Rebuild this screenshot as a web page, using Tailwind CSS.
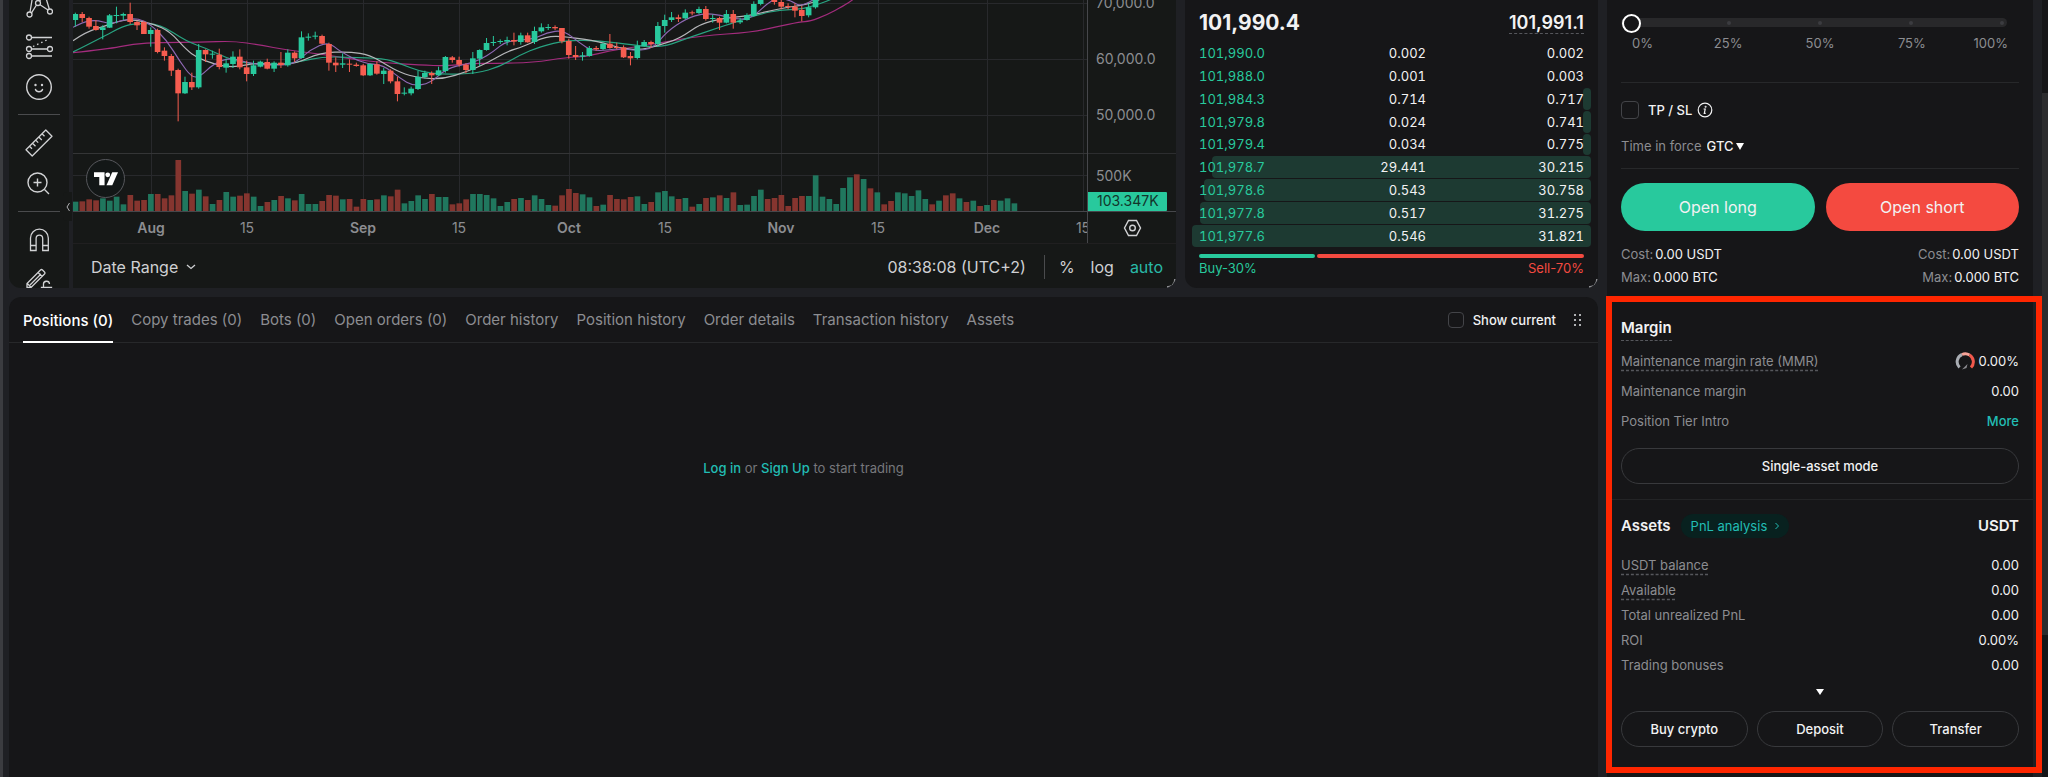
<!DOCTYPE html>
<html lang="en">
<head>
  <meta charset="UTF-8" />
  <meta name="viewport" content="width=device-width, initial-scale=1.0"/>
  <title>BTCUSDT Futures</title>
  <script src="https://cdn.jsdelivr.net/npm/@tailwindcss/browser@4"></script>
</head>
<body class="bg-[#1f2024] text-[#f2f2f3] font-['Inter',sans-serif] text-[13px] leading-5">

  <div class="flex h-screen min-h-[777px] overflow-hidden border-l-3 border-[#3b3c40] pl-1.5">

    <main class="flex min-w-0 flex-1 flex-col gap-[9px]">
      <div class="flex h-72 gap-[9px]">

        <!-- Chart -->
        <section class="relative flex min-w-0 flex-1 overflow-hidden rounded-b-xl bg-[#161817]">

          <!-- Drawing tools -->
          <div class="flex w-[60px] shrink-0 flex-col items-center overflow-hidden text-[#d2d3d5]">
            <button aria-label="Patterns" class="-mt-4 flex h-[41px] shrink-0 items-center justify-center">
              <svg class="size-7" viewBox="0 0 28 28" fill="none" stroke="currentColor" stroke-width="1.3"><circle cx="4.5" cy="23.5" r="2.5"/><circle cx="25" cy="20.5" r="2.5"/><circle cx="13" cy="12" r="2.5"/><circle cx="8" cy="3" r="2.5"/><circle cx="20" cy="3" r="2.5"/><path d="M5 21 7.6 5.5M6.5 21.8 11.5 14M15 13.7 23 19M20.5 5.5 24.3 18M18.5 5 14.5 10"/></svg>
            </button>
            <button aria-label="Fib retracement" class="flex h-[41px] shrink-0 items-center justify-center">
              <svg class="size-7" viewBox="0 0 28 28" fill="none" stroke="currentColor" stroke-width="1.3"><circle cx="4" cy="5.5" r="2.5"/><circle cx="4" cy="17" r="2.5"/><circle cx="25" cy="17" r="2.5"/><circle cx="4" cy="24" r="2.5"/><path d="M6.5 5.5H27M6.5 17H22.5M6.5 24H27"/><path d="M8 14.5 24 7" stroke-dasharray="1.5 3"/></svg>
            </button>
            <button aria-label="Emoji" class="flex h-[41px] shrink-0 items-center justify-center">
              <svg class="size-7" viewBox="0 0 28 28" fill="none" stroke="currentColor" stroke-width="1.4"><circle cx="14" cy="14" r="12.3"/><path d="M10.5 16.5c1 3 6 3 7 0" stroke-linecap="round"/><circle cx="10.5" cy="12" r="1.2" fill="currentColor" stroke="none"/><circle cx="17" cy="12" r="1.2" fill="currentColor" stroke="none"/></svg>
            </button>
            <div class="my-[7px] h-px w-[42px] shrink-0 bg-[#4a4b4d]"></div>
            <button aria-label="Measure" class="flex h-[41px] shrink-0 items-center justify-center">
              <svg class="size-7" viewBox="0 0 28 28" fill="none" stroke="currentColor" stroke-width="1.3" stroke-linejoin="round"><path d="M1 20.8 20.8 1 27 7.2 7.2 27ZM4.5 17.3l2.5 2.5M7.5 14.3l3 3M10.7 11.1l2.5 2.5M13.8 8l3 3M17 4.8l2.5 2.5"/></svg>
            </button>
            <button aria-label="Zoom in" class="flex h-[41px] shrink-0 items-center justify-center">
              <svg class="size-7" viewBox="0 0 28 28" fill="none" stroke="currentColor" stroke-width="1.4"><circle cx="12.5" cy="12.5" r="9.5"/><path d="M12.5 8.5v8M8.5 12.500h8M19.5 19.5 24 24"/></svg>
            </button>
            <div class="my-[7px] h-px w-[42px] shrink-0 bg-[#4a4b4d]"></div>
            <button aria-label="Magnet" class="flex h-[41px] shrink-0 items-center justify-center">
              <svg class="size-7" viewBox="0 0 28 28" fill="none" stroke="currentColor" stroke-width="1.3"><path d="M5.5 24.5V12a8.9 8.9 0 0 1 17.8 0v12.5h-5.6V12.5a3.3 3.3 0 0 0-6.6 0v12ZM5.5 19.5h5.6M17.7 19.5h5.6"/></svg>
            </button>
            <button aria-label="Lock drawings" class="flex h-[41px] shrink-0 items-center justify-center">
              <svg class="size-7" viewBox="0 0 28 28" fill="none" stroke="currentColor" stroke-width="1.3"><path d="M2 20.5v-4L15.5 3a1.5 1.5 0 0 1 2 0l2 2a1.5 1.5 0 0 1 0 2L6 20.5ZM13 5.5l4 4M2.3 16.5l3.9 3.9M5 18 16 7"/><path d="M16.5 20.5h10v8h-10ZM18.5 20.5v-3a3 3 0 0 1 6-.5"/></svg>
            </button>
          </div>

          <div class="w-1 shrink-0 bg-[#1f2024]"></div>

          <div class="flex min-w-0 flex-1 flex-col">
            <div class="flex h-[243px]">
              <svg id="plot" class="h-full min-w-0 flex-1" viewBox="0 0 1014 243" preserveAspectRatio="xMinYMin slice"></svg>
              <svg class="h-full w-[89px] shrink-0 border-l border-[#46474b] text-sm" viewBox="0 0 88 243" fill="#8c8d91">
                <path d="M0 153.5H88" stroke="#2c2d2f"/>
                <path d="M0 211.5H88" stroke="#46474b"/>
                <text x="8" y="8">70,000.0</text>
                <text x="8" y="64">60,000.0</text>
                <text x="8" y="120">50,000.0</text>
                <text x="8" y="181">500K</text>
                <rect x="-1" y="192" width="80" height="19" rx="1" fill="#28c99d"/>
                <text x="9" y="206" fill="#12352b">103.347K</text>
                <g fill="none" stroke="#d2d3d5" stroke-width="1.4"><path d="M40.500 220.500h8l4 7.500-4 7.500h-8l-4-7.500Z"/><circle cx="44.5" cy="228" r="2.8"/></g>
              </svg>
            </div>
            <div class="flex flex-1 items-center border-t border-[#201f20] pl-[18px] pr-[13px] pt-0.5 text-base text-[#cfd0d3]">
              <button class="flex items-center gap-2">Date Range
                <svg class="h-1.5 w-2.5" viewBox="0 0 10 6" fill="none" stroke="currentColor" stroke-width="1.3"><path d="m1 1 4 3.500L9 1"/></svg>
              </button>
              <span class="ml-auto">08:38:08 (UTC+2)</span>
              <span class="ml-[18px] mr-3.5 h-6 w-px bg-[#4a4b4d]"></span>
              <button>%</button>
              <button class="ml-4">log</button>
              <button class="ml-4 text-[#29b8a8]">auto</button>
            </div>
          </div>

          <button aria-label="Collapse tools" class="absolute left-[54px] top-48 flex h-[29px] w-[9px] items-center justify-center rounded-l bg-[#161817] text-[#b0b1b4]">
            <svg class="h-2.5 w-1" viewBox="0 0 4 10" fill="none" stroke="currentColor"><path d="M3.5 1 1 5l2.500 4"/></svg>
          </button>
          <a href="#" aria-label="TradingView" class="absolute left-[77px] top-[159px] flex size-[39px] items-center justify-center rounded-full border border-[#56575c] bg-[#131717]">
            <svg class="h-3.5 w-6" viewBox="0 0 25 14" fill="#fff"><path d="M0 0h11v13.500H5.500V5H0Z"/><circle cx="14.3" cy="2.7" r="2.5"/><path d="M19 0h6l-6 13.500h-6Z"/></svg>
          </a>
          <div class="absolute bottom-0 right-0 size-[9px] rounded-br-lg border-b-2 border-r-2 border-[#8c8d91]"></div>
        </section>

        <!-- Order book -->
        <section class="relative w-[413px] shrink-0 overflow-hidden rounded-b-xl bg-[#161618] px-[7px]">
          <div class="flex h-[42px] items-center justify-between px-[7px] pt-1">
            <span class="text-[21px] font-bold">101,990.4</span>
            <span class="border-b border-dashed border-[#56575c] text-lg leading-5 font-semibold">101,991.1</span>
          </div>
          <div id="book" class="grid h-[205px] auto-rows-fr gap-px tabular-nums"></div>
          <div class="mt-[7px] flex gap-0.5 px-[7px]">
            <div class="h-1 w-[30%] rounded-full bg-[#28c99d]"></div>
            <div class="h-1 flex-1 rounded-full bg-[#f44a40]"></div>
          </div>
          <div class="flex justify-between px-[7px]">
            <span class="text-[#28c99d]">Buy-30%</span>
            <span class="text-[#f44a40]">Sell-70%</span>
          </div>
          <div class="absolute bottom-0 right-0 size-[9px] rounded-br-lg border-b-2 border-r-2 border-[#8c8d91]"></div>
        </section>
      </div>

      <!-- Positions -->
      <section class="flex flex-1 flex-col rounded-t-xl bg-[#161618]">
        <nav class="flex h-[46px] items-stretch gap-[18px] whitespace-nowrap border-b border-[#27282a] pl-3.5 pr-4 pt-px text-[15px] text-[#8c8d91]">
          <button class="-mb-px border-b-2 border-white pt-0.5 font-medium text-white">Positions (0)</button>
          <button>Copy trades (0)</button>
          <button>Bots (0)</button>
          <button>Open orders (0)</button>
          <button>Order history</button>
          <button>Position history</button>
          <button>Order details</button>
          <button>Transaction history</button>
          <button>Assets</button>
          <label class="ml-auto flex items-center gap-[9px] text-[13px] font-medium text-[#f2f2f3]">
            <input type="checkbox" class="size-4 appearance-none rounded border border-[#434448]" />
            Show current
          </label>
          <button aria-label="Drag panel">
            <svg class="h-3 w-2" viewBox="0 0 8 12" fill="#b0b1b4"><path d="M0 0h2v2H0zM5 0h2v2H5zM0 5h2v2H0zM5 5h2v2H5zM0 10h2v2H0zM5 10h2v2H5z"/></svg>
          </button>
        </nav>
        <p class="mt-[115px] text-center text-[#77787c]">
          <a href="#" class="font-medium text-[#22bdb4]">Log in</a>
          or <a href="#" class="font-medium text-[#22bdb4]">Sign Up</a>
          to start trading
        </p>
      </section>
    </main>

    <!-- Trade panel -->
    <aside class="relative mx-[9px] flex w-[426px] shrink-0 flex-col bg-[#161618]">
      <form class="h-[296px] px-3.5 pt-3">
        <div class="relative h-[21px]">
          <div class="absolute inset-x-0 top-1.5 mr-3 flex h-[9px] items-center justify-between rounded-full bg-[#28282a] pl-[15px] pr-[3px]">
            <span class="size-1"></span>
            <span class="size-1 rounded-full bg-[#3b3c40]"></span>
            <span class="size-1 rounded-full bg-[#3b3c40]"></span>
            <span class="size-1 rounded-full bg-[#3b3c40]"></span>
            <span class="size-1 rounded-full bg-[#3b3c40]"></span>
          </div>
          <input type="range" aria-label="Order size" min="0" max="100" value="0" class="absolute inset-x-px top-0 h-[22px] appearance-none bg-transparent [&::-webkit-slider-thumb]:size-[19px] [&::-webkit-slider-thumb]:appearance-none [&::-webkit-slider-thumb]:rounded-full [&::-webkit-slider-thumb]:border-2 [&::-webkit-slider-thumb]:border-white [&::-webkit-slider-thumb]:bg-[#161618]" />
        </div>
        <div class="grid grid-cols-[2fr_3fr_3fr_3fr_2fr] text-center text-[#8c8d91]">
          <span class="pl-[11px] text-left">0%</span><span>25%</span><span>50%</span><span>75%</span><span class="pr-[11px] text-right">100%</span>
        </div>
        <div class="mt-[29px] border-t border-[#27282a] pt-[17px]">
          <label class="flex items-center gap-[9px] font-medium">
            <input type="checkbox" class="size-[18px] appearance-none rounded border border-[#434448]" />
            <span class="flex items-center gap-[5px]">TP / SL
              <svg class="size-4" viewBox="0 0 16 16" fill="none" stroke="currentColor" stroke-width="1.2"><circle cx="8" cy="8" r="6.8"/><path d="M6.6 7h1.6l-.9 4.300h1.400"/><circle cx="8.6" cy="4.7" r=".4"/></svg>
            </span>
          </label>
        </div>
        <div class="mt-4 flex items-center gap-[5px] border-b border-[#27282a] pb-3">
          <label for="tif" class="text-[#8c8d91]">Time in force</label>
          <div class="relative flex items-center">
            <select id="tif" class="appearance-none pr-2.5 font-medium">
              <option>GTC</option>
              <option>IOC</option>
              <option>FOK</option>
            </select>
            <svg class="pointer-events-none absolute right-0 size-2" viewBox="0 0 8 8" fill="#fff"><path d="M0 1h8L4 8Z"/></svg>
          </div>
        </div>
        <div class="mt-3.5 grid grid-cols-2 gap-[11px] text-base">
          <button type="button" class="h-12 rounded-full bg-[#28c99d]">Open long</button>
          <button type="button" class="h-12 rounded-full bg-[#f44a40]">Open short</button>
        </div>
        <div class="mt-3 flex justify-between leading-[23px]">
          <div>
            <p class="flex gap-0.5"><span class="text-[#8c8d91]">Cost:</span><span>0.00 USDT</span></p>
            <p class="flex gap-0.5"><span class="text-[#8c8d91]">Max:</span><span>0.000 BTC</span></p>
          </div>
          <div>
            <p class="flex justify-end gap-0.5"><span class="text-[#8c8d91]">Cost:</span><span>0.00 USDT</span></p>
            <p class="flex justify-end gap-0.5"><span class="text-[#8c8d91]">Max:</span><span>0.000 BTC</span></p>
          </div>
        </div>
      </form>

      <!-- Margin -->
      <section class="px-3.5 pb-[15px] pt-5">
        <h2 class="mb-2.5 w-fit border-b border-dashed border-[#56575c] text-[15px] font-semibold leading-6">Margin</h2>
        <dl class="flex flex-col gap-2.5 text-[#8c8d91]">
          <div class="flex justify-between">
            <dt class="underline decoration-[#56575c] decoration-dashed underline-offset-4">Maintenance margin rate (MMR)</dt>
            <dd class="flex items-center gap-1 text-[#f2f2f3]">
              <svg class="size-5" viewBox="0 0 20 20" fill="none" stroke-width="3"><path d="M4.5 16.5A8 8 0 0 1 7 3.500" stroke="#a9adb3"/><path d="M7 3.500a8 8 0 0 1 7.500.5" stroke="#f7a398"/><path d="M14.5 4a8 8 0 0 1 1.500 12.500" stroke="#f0584c"/><path d="M7 18.500 12.500 13l-1 4Z" fill="#8c8d91"/></svg>
              0.00%
            </dd>
          </div>
          <div class="flex justify-between">
            <dt>Maintenance margin</dt>
            <dd class="text-[#f2f2f3]">0.00</dd>
          </div>
          <div class="flex justify-between">
            <dt>Position Tier Intro</dt>
            <dd><a href="#" class="font-medium text-[#22bdb4]">More</a></dd>
          </div>
        </dl>
        <button class="mt-[17px] h-9 w-full rounded-full border border-[#38393c] font-medium">Single-asset mode</button>
      </section>

      <!-- Assets -->
      <section class="border-t border-[#232426] px-3.5 pt-3.5">
        <div class="mb-[17px] flex items-center">
          <h2 class="text-[15px] font-semibold">Assets</h2>
          <a href="#" class="ml-2.5 flex h-6 items-center gap-2 rounded-full bg-[#08211f] px-2.5 text-[#22bdb4]">PnL analysis
            <svg class="h-2 w-1" viewBox="0 0 4 8" fill="none" stroke="currentColor"><path d="m.5 1 3 3-3 3"/></svg>
          </a>
          <span class="ml-auto text-[15px] font-semibold">USDT</span>
        </div>
        <dl class="flex flex-col gap-[5px] text-[#8c8d91]">
          <div class="flex justify-between">
            <dt class="underline decoration-[#56575c] decoration-dashed underline-offset-4">USDT balance</dt>
            <dd class="text-[#f2f2f3]">0.00</dd>
          </div>
          <div class="flex justify-between">
            <dt class="underline decoration-[#56575c] decoration-dashed underline-offset-4">Available</dt>
            <dd class="text-[#f2f2f3]">0.00</dd>
          </div>
          <div class="flex justify-between">
            <dt>Total unrealized PnL</dt>
            <dd class="text-[#f2f2f3]">0.00</dd>
          </div>
          <div class="flex justify-between">
            <dt>ROI</dt>
            <dd class="text-[#f2f2f3]">0.00%</dd>
          </div>
          <div class="flex justify-between">
            <dt>Trading bonuses</dt>
            <dd class="text-[#f2f2f3]">0.00</dd>
          </div>
        </dl>
        <button aria-label="Show more" class="mx-auto mt-3.5 block">
          <svg class="h-1.5 w-2" viewBox="0 0 8 6" fill="#fff"><path d="M0 0h8L4 6Z"/></svg>
        </button>
        <div class="mt-4 grid grid-cols-3 gap-[9px] font-medium">
          <button class="h-9 rounded-full border border-[#38393c]">Buy crypto</button>
          <button class="h-9 rounded-full border border-[#38393c]">Deposit</button>
          <button class="h-9 rounded-full border border-[#38393c]">Transfer</button>
        </div>
      </section>

      <!-- Highlight frame -->
      <div class="pointer-events-none absolute -left-px -right-[9px] bottom-1 top-[296px] border-6 border-[#ff2600]"></div>
    </aside>

    <div class="w-1.5 shrink-0 bg-[#161618] pt-[93px]">
      <div class="h-[542px] bg-[#2c2c2e]"></div>
    </div>
  </div>

  <script>
    // one entry per day: direction, high, open/close top, open/close bottom, low
    const candles = `g38,42,60,80 r36,42,54,66 r50,54,80,86 r60,78,90,92 g76,82,90,118 g42,46,83,84 g20,45,48,70 g38,42,47,60
      r8,42,66,72 r62,66,76,90 r62,66,102,102 g82,90,102,140 r86,90,156,160 r142,152,168,182 r162,168,212,228 r206,210,280,364
      g230,246,280,282 r218,246,262,270 g132,150,262,266 r148,150,163,186 g152,161,164,176 r146,164,201,208 g176,190,203,218 g154,170,192,204
      r148,170,202,208 r182,202,222,244 g182,196,222,228 g182,185,200,202 r176,186,206,208 g184,188,206,216 r156,188,195,204 g148,158,196,200
      r154,158,175,186 g94,112,174,176 g100,110,113,122 g95,107,110,118 r104,108,131,132 r128,132,188,212 r172,188,196,216 g160,190,194,204
      r178,191,194,216 r188,194,198,200 r192,196,226,228 g190,192,226,228 r184,193,221,224 g204,212,222,252 r208,212,244,250 r230,244,282,304
      g262,278,281,286 g260,266,280,286 g212,230,267,270 g212,219,231,236 r214,219,226,252 g200,211,226,228 g168,171,213,218 r168,172,180,188
      r170,180,194,200 r190,194,210,220 g156,175,210,222 g148,150,176,198 g114,129,150,152 g108,126,129,138 g118,123,126,132 g110,120,125,136
      r98,120,125,136 g98,106,126,134 r98,106,127,128 g80,93,126,132 g70,82,94,98 g72,81,84,90 r76,81,85,90 r84,84,124,130
      r116,123,165,176 r138,165,171,180 g156,166,170,182 g138,144,168,170 r138,144,148,152 g128,131,147,150 r102,131,144,146 r128,141,144,148
      r136,142,172,174 r156,168,175,196 g122,137,174,178 g120,126,139,140 r122,126,132,144 g66,78,132,138 g44,60,78,98 g36,52,60,66
      r44,52,57,66 g28,38,55,58 r32,37,40,46 g20,27,39,42 r18,27,57,62 g44,54,57,68 r50,54,68,90 g30,42,68,70
      r30,42,68,86 g54,62,67,72 g40,45,60,62 g4,12,48,50 g-10,-4,12,16 r-20,-16,-8,-4 r-10,0,6,14 r0,6,20,28
      r10,18,21,28 r10,20,32,52 r18,30,48,64 g10,22,46,52 g-10,-4,22,26`.split(/\s+/);

    const volumes = `g28 r29 r35 r32 g38 g31 g43 g20 r48 r31 r33 g51 r51 r38 r47 r153 g60 r52 g64 r44 g21 r33 g57 g43
      r46 r53 g43 g15 r27 g33 r45 g38 r32 g51 g21 g21 r30 r48 r46 g35 r36 r13 r36 g33 r35 g47 r44 r64
      g23 g30 g47 g36 r51 g42 g42 r20 r23 r35 g51 g51 g48 g38 g15 g27 r36 g39 r33 g47 g36 g18 r16 r47
      r66 r54 g50 g41 r15 g19 r48 r36 r35 r42 g44 g21 r27 g56 g60 g44 r36 g39 r13 g21 r39 g41 r47 g39
      r56 g18 g19 g45 g64 r36 r39 r48 r15 r39 r45 g45 g107 g43 g36 g21 g69 g101 r110 g96 r68 g56 r20 r30
      g56 g53 g45 g62 g36 r20 g31 r47 r53 g38 r27 g31 r15 g18 r33 g31 g38 g23`.split(/\s+/);

    const averages = [
      ["#a32c7d", "219,158 320,148 400,132 480,127 600,127 700,123 780,135 860,150 960,162 1060,178 1150,188 1260,195 1340,198 1420,190 1480,190 1600,188 1700,172 1760,170 1830,152 1900,142 2000,125 2100,108 2260,96 2330,80 2400,66 2430,64 2480,45 2530,18 2558,0 2580,-20"],
      ["#28a381", "219,156 300,115 370,78 410,70 480,72 560,125 620,145 680,175 740,190 830,195 900,185 970,170 1050,172 1150,175 1200,190 1260,215 1330,224 1430,220 1500,200 1560,165 1620,140 1700,120 1800,122 1900,135 1950,140 2000,138 2060,115 2150,85 2200,68 2280,42 2340,30 2400,28 2440,18 2490,0 2520,-15"],
      ["#b5b6b9", "219,122 260,95 310,80 360,62 400,58 460,72 510,95 560,150 590,172 640,192 700,203 770,188 830,195 890,190 960,158 1050,155 1110,165 1160,195 1200,218 1260,235 1330,237 1400,215 1460,190 1520,155 1570,140 1640,108 1700,110 1800,125 1860,145 1920,150 1970,138 2040,115 2100,72 2170,55 2240,48 2300,35 2360,22 2400,17 2450,5 2480,-15"],
      ["#8e68b3", "219,82 250,65 290,60 330,72 370,60 410,54 450,72 500,120 540,185 575,232 600,230 640,192 690,172 740,188 800,195 860,195 890,185 930,150 985,125 1020,155 1090,190 1150,195 1200,235 1240,258 1290,250 1340,205 1400,192 1440,180 1480,155 1520,122 1600,118 1640,98 1690,90 1740,130 1780,155 1860,145 1910,152 1960,145 2000,95 2060,55 2110,40 2160,45 2220,60 2260,50 2300,12 2330,-6 2370,0 2400,20 2440,0 2470,-20"]
    ];

    const months = [[151, "Aug"], [247, "15"], [363, "Sep"], [459, "15"], [569, "Oct"], [665, "15"], [781, "Nov"], [878, "15"], [987, "Dec"], [1083, "15"]];

    // rounds the corners of a list of points
    function smooth(list) {
      const p = list.split(" ").map(s => s.split(",").map(Number));
      let d = `M${p[0]}`;
      for (let i = 1; i < p.length - 1; i++) {
        d += `Q${p[i]} ${(p[i][0] + p[i + 1][0]) / 2},${(p[i][1] + p[i + 1][1]) / 2}`;
      }
      return d;
    }

    let out = "";
    months.forEach(([x]) => out += `<path d="M${x - 73}.5 0V211" stroke="#28292c"/>`);
    [3, 59, 115, 175].forEach(y => out += `<path d="M0 ${y}.5H1014" stroke="#28292c"/>`);
    out += `<path d="M0 153.5H1014" stroke="#343536"/>`;

    out += `<g transform="scale(0.33333) translate(-219 0)">`;
    volumes.forEach((v, i) => {
      const h = Number(v.slice(1));
      out += `<rect x="${218 + i * 20.56}" y="${633 - h}" width="17" height="${h}" fill="${v[0] === "g" ? "#20775e" : "#85352f"}"/>`;
    });
    averages.forEach(([color, list]) => out += `<path d="${smooth(list)}" fill="none" stroke="${color}" stroke-width="3.5"/>`);
    candles.forEach((c, i) => {
      const [hi, top, bottom, lo] = c.slice(1).split(",").map(Number);
      const x = 226 + i * 20.56;
      const fill = c[0] === "g" ? "#28c99d" : "#f65d50";
      out += `<rect x="${x - 1.5}" y="${hi}" width="3" height="${lo - hi}" fill="${fill}"/>`;
      out += `<rect x="${x - 8.5}" y="${top}" width="17" height="${Math.max(bottom - top, 3)}" fill="${fill}"/>`;
    });
    out += `</g><path d="M0 211.5H1014" stroke="#46474b"/>`;
    months.forEach(([x, t]) => {
      out += `<text x="${x - 73}" y="233" text-anchor="middle" font-size="14" fill="#8c8d91" font-weight="${t === "15" ? 400 : 600}">${t}</text>`;
    });
    document.getElementById("plot").innerHTML = out;

    // price, amount, running total, depth in % of the row
    const bids = [
      ["101,990.0", "0.002", "0.002", 0],
      ["101,988.0", "0.001", "0.003", 0],
      ["101,984.3", "0.714", "0.717", 2],
      ["101,979.8", "0.024", "0.741", 2],
      ["101,979.4", "0.034", "0.775", 2],
      ["101,978.7", "29.441", "30.215", 95],
      ["101,978.6", "0.543", "30.758", 97],
      ["101,977.8", "0.517", "31.275", 98],
      ["101,977.6", "0.546", "31.821", 100]
    ];
    document.getElementById("book").innerHTML = bids.map(([price, amount, total, depth]) => `
      <div class="relative flex items-center px-[7px]">
        <div class="absolute inset-y-0 right-0 rounded bg-[#1d3a32]" style="width:${depth}%"></div>
        <span class="relative w-[60px] text-[#28c99d]">${price}</span>
        <span class="relative flex-1 text-right">${amount}</span>
        <span class="relative w-[158px] text-right">${total}</span>
      </div>`).join("");
  </script>

</body>
</html>
